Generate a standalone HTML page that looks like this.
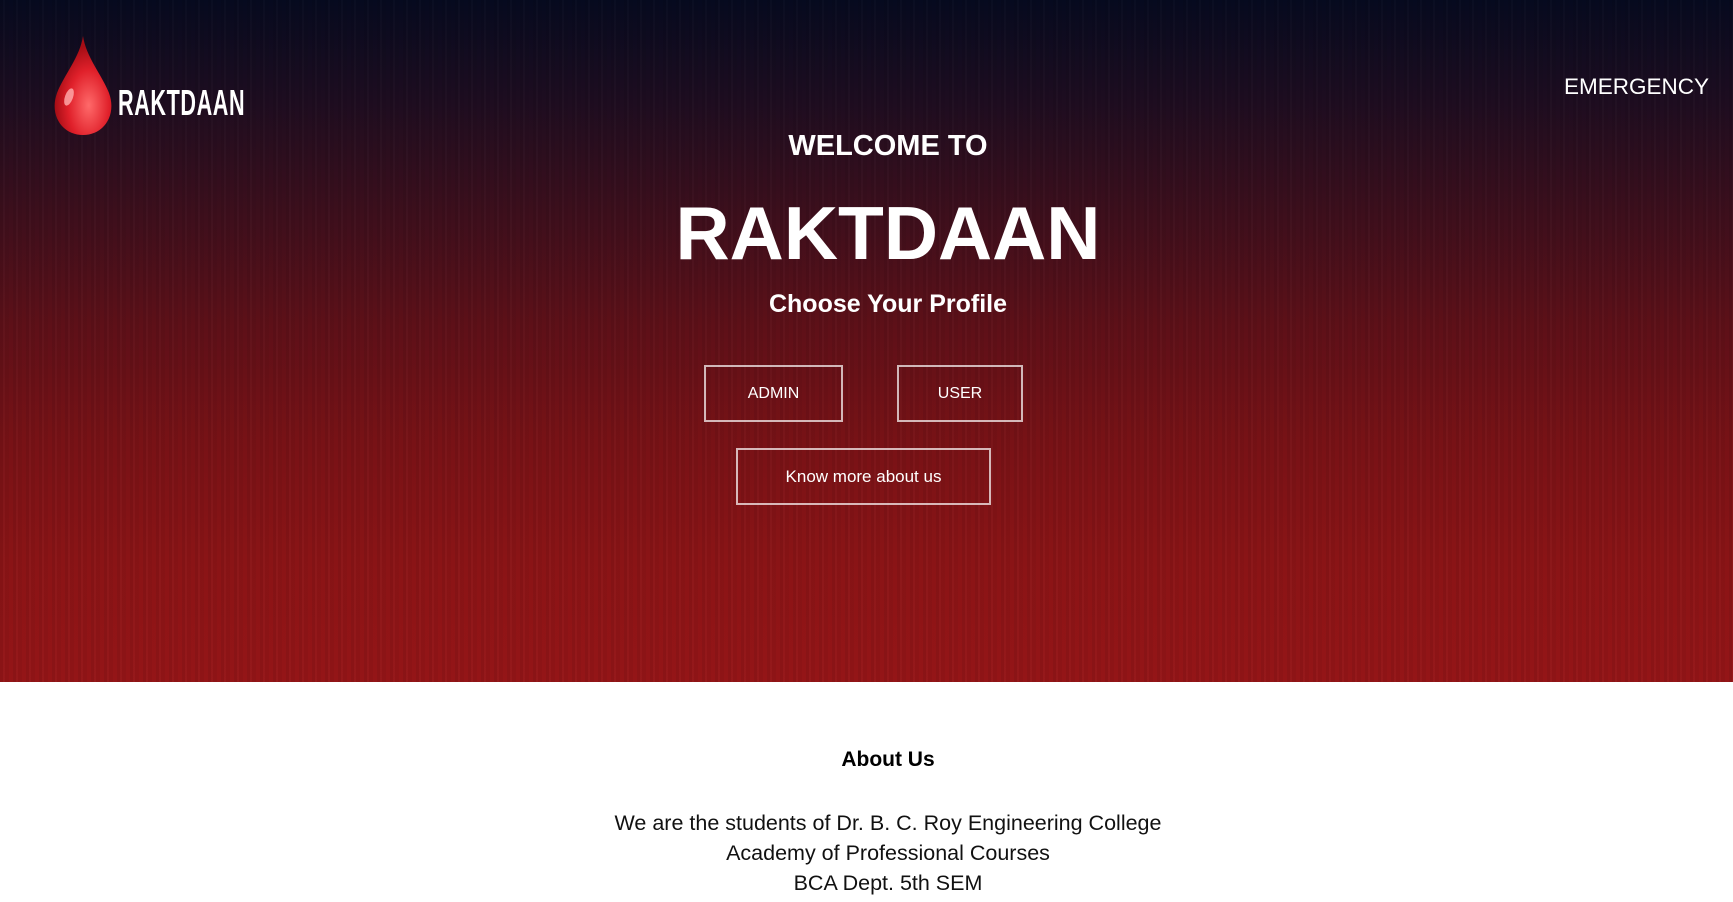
<!DOCTYPE html>
<html><head><meta charset="utf-8"><style>
*{margin:0;padding:0;box-sizing:border-box}
body{width:1733px;height:902px;overflow:hidden;background:#fff;font-family:"Liberation Sans",sans-serif}
.hero{position:absolute;left:0;top:0;width:1733px;height:682px;
background:linear-gradient(to bottom,#060a1f 0%,#1e0d20 15%,#3e0f1c 32%,#5e1018 48%,#781216 65%,#8a1416 82%,#941517 100%);overflow:hidden}
.tex{position:absolute;inset:0;background:repeating-linear-gradient(90deg,rgba(0,0,0,.06) 0 3px,rgba(255,255,255,.015) 3px 5px,rgba(0,0,0,.04) 5px 9px,rgba(255,255,255,0) 9px 13px);}
.c{position:absolute;color:#fff;text-align:center;white-space:nowrap}
.btn{position:absolute;border:2px solid rgba(255,255,255,.7);color:#fff;font-size:16px;display:flex;align-items:center;justify-content:center}
</style></head><body>
<div class="hero"><div class="tex"></div>
<svg style="position:absolute;left:52px;top:35px" width="62" height="102" viewBox="0 0 62 102">
<defs><radialGradient id="g" cx="0.6" cy="0.7" r="0.6"><stop offset="0" stop-color="#ff6a6a"/><stop offset="0.6" stop-color="#e0202a"/><stop offset="1" stop-color="#a50d15"/></radialGradient></defs>
<path d="M31 1 C28 22 12 40 5 58 C-3 80 10 100 31 100 C52 100 65 80 57 58 C50 40 34 22 31 1Z" fill="url(#g)"/>
<ellipse cx="17" cy="62" rx="4" ry="9" fill="#ffb0b0" opacity=".8" transform="rotate(20 17 62)"/>
</svg>
<div class="c" style="left:118px;top:82px;font-size:36px;font-weight:bold;transform:scaleX(.6);transform-origin:left;letter-spacing:1px">RAKTDAAN</div>
<div class="c" style="left:1564px;top:74px;font-size:22.5px">EMERGENCY</div>
<div class="c" style="left:688px;width:400px;top:130px;font-size:29px;font-weight:bold">WELCOME TO</div>
<div class="c" style="left:588px;width:600px;top:190px;font-size:75px;font-weight:bold">RAKTDAAN</div>
<div class="c" style="left:688px;width:400px;top:290px;font-size:25px;font-weight:bold">Choose Your Profile</div>
<div class="btn" style="left:704px;top:365px;width:139px;height:57px">ADMIN</div>
<div class="btn" style="left:897px;top:365px;width:126px;height:57px">USER</div>
<div class="btn" style="left:736px;top:448px;width:255px;height:57px;font-size:17px">Know more about us</div>
</div>
<div class="c" style="left:688px;width:400px;top:748px;font-size:21px;font-weight:bold;color:#000">About Us</div>
<div class="c" style="left:588px;width:600px;top:808px;font-size:21.5px;line-height:30px;color:#111">We are the students of Dr. B. C. Roy Engineering College<br>Academy of Professional Courses<br>BCA Dept. 5th SEM</div>
</body></html>
